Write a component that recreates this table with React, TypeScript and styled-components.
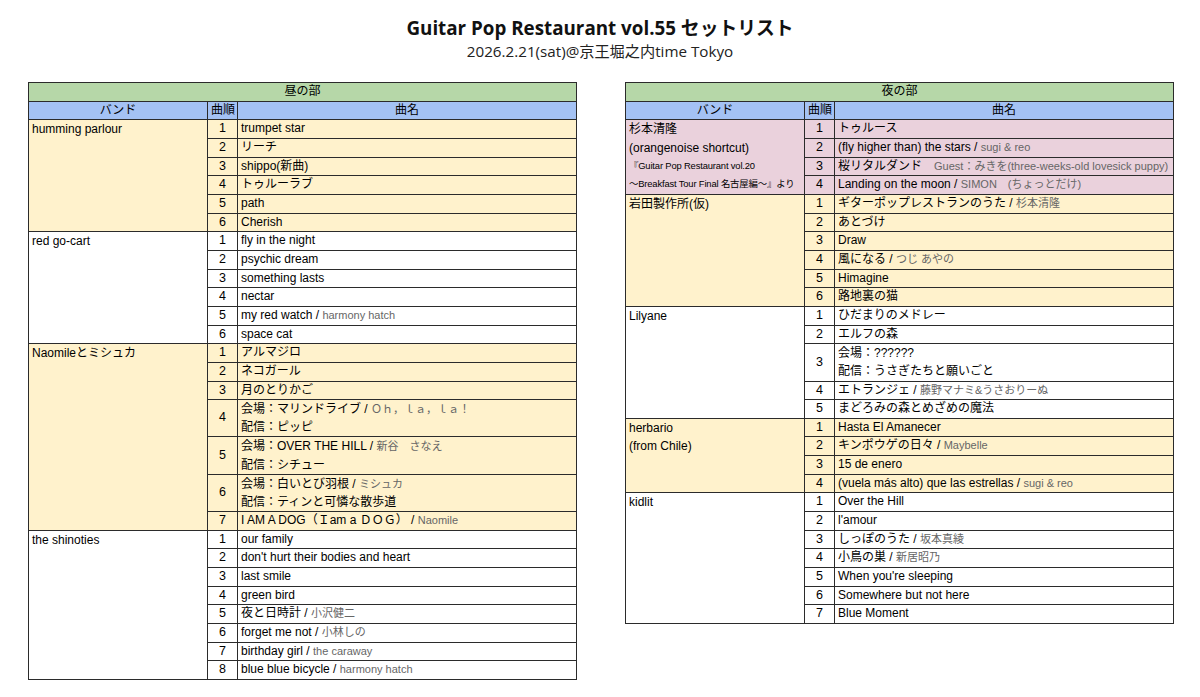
import React from "react";
import styled, { createGlobalStyle } from "styled-components";

// ---------------- Data ----------------
type Line = { title: string; artist?: string; note?: string };
type Song = Line[];
type Tone = "yellow" | "white" | "pink";

interface Band {
  name: string[];
  small?: string[];
  tone: Tone;
  songs: Song[];
}

const s = (title: string, artist?: string): Song => [{ title, artist }];

const dayBands: Band[] = [
  {
    name: ["humming parlour"],
    tone: "yellow",
    songs: [s("trumpet star"), s("リーチ"), s("shippo(新曲)"), s("トゥルーラブ"), s("path"), s("Cherish")],
  },
  {
    name: ["red go-cart"],
    tone: "white",
    songs: [
      s("fly in the night"),
      s("psychic dream"),
      s("something lasts"),
      s("nectar"),
      s("my red watch", "harmony hatch"),
      s("space cat"),
    ],
  },
  {
    name: ["Naomileとミシュカ"],
    tone: "yellow",
    songs: [
      s("アルマジロ"),
      s("ネコガール"),
      s("月のとりかご"),
      [{ title: "会場：マリンドライブ", artist: "Ｏｈ，ｌａ，ｌａ！" }, { title: "配信：ピッピ" }],
      [{ title: "会場：OVER THE HILL", artist: "新谷　さなえ" }, { title: "配信：シチュー" }],
      [{ title: "会場：白いとび羽根", artist: "ミシュカ" }, { title: "配信：ティンと可憐な散歩道" }],
      s("I AM A DOG（Ｉam a ＤＯＧ） ", "Naomile"),
    ],
  },
  {
    name: ["the shinoties"],
    tone: "white",
    songs: [
      s("our family"),
      s("don't hurt their bodies and heart"),
      s("last smile"),
      s("green bird"),
      s("夜と日時計", "小沢健二"),
      s("forget me not", "小林しの"),
      s("birthday girl", "the caraway"),
      s("blue blue bicycle", "harmony hatch"),
    ],
  },
];

const nightBands: Band[] = [
  {
    name: ["杉本清隆", "(orangenoise shortcut)"],
    small: ["『Guitar Pop Restaurant vol.20", "～Breakfast Tour Final 名古屋編～』より"],
    tone: "pink",
    songs: [
      s("トゥルース"),
      s("(fly higher than) the stars", "sugi & reo"),
      [{ title: "桜リタルダンド", note: "Guest：みきを(three-weeks-old lovesick puppy)" }],
      s("Landing on the moon", "SIMON　(ちょっとだけ)"),
    ],
  },
  {
    name: ["岩田製作所(仮)"],
    tone: "yellow",
    songs: [
      s("ギターポップレストランのうた", "杉本清隆"),
      s("あとづけ"),
      s("Draw"),
      s("風になる", "つじ あやの"),
      s("Himagine"),
      s("路地裏の猫"),
    ],
  },
  {
    name: ["Lilyane"],
    tone: "white",
    songs: [
      s("ひだまりのメドレー"),
      s("エルフの森"),
      [{ title: "会場：??????" }, { title: "配信：うさぎたちと願いごと" }],
      s("エトランジェ", "藤野マナミ&うさおりーぬ"),
      s("まどろみの森とめざめの魔法"),
    ],
  },
  {
    name: ["herbario", "(from Chile)"],
    tone: "yellow",
    songs: [
      s("Hasta El Amanecer"),
      s("キンポウゲの日々", "Maybelle"),
      s("15 de enero"),
      s("(vuela más alto) que las estrellas", "sugi & reo"),
    ],
  },
  {
    name: ["kidlit"],
    tone: "white",
    songs: [
      s("Over the Hill"),
      s("l'amour"),
      s("しっぽのうた", "坂本真綾"),
      s("小鳥の巣", "新居昭乃"),
      s("When you're sleeping"),
      s("Somewhere but not here"),
      s("Blue Moment"),
    ],
  },
];

const toneColor: Record<Tone, string> = {
  yellow: "#fff2cc",
  white: "#ffffff",
  pink: "#ead1dc",
};

// ---------------- Components ----------------
const SetTable: React.FC<{ title: string; bands: Band[] }> = ({ title, bands }) => (
  <Table>
    <colgroup>
      <col style={{ width: 179 }} />
      <col style={{ width: 30 }} />
      <col />
    </colgroup>
    <thead>
      <tr>
        <SectionTh colSpan={3}>{title}</SectionTh>
      </tr>
      <tr>
        <ColTh>バンド</ColTh>
        <ColTh>曲順</ColTh>
        <ColTh>曲名</ColTh>
      </tr>
    </thead>
    {bands.map((band) => (
      <tbody key={band.name[0]}>
        {band.songs.map((song, i) => (
          <tr key={i}>
            {i === 0 && (
              <BandTd rowSpan={band.songs.length} $tone={band.tone}>
                {band.name.map((n) => (
                  <BandLine key={n}>{n}</BandLine>
                ))}
                {band.small?.map((n) => (
                  <BandLine key={n} $small>
                    {n}
                  </BandLine>
                ))}
              </BandTd>
            )}
            <NumTd $tone={band.tone}>{i + 1}</NumTd>
            <SongTd $tone={band.tone}>
              {song.map((line, j) => (
                <SongLine key={j} $multi={song.length > 1}>
                  {line.title}
                  {line.artist && (
                    <>
                      {" / "}
                      <Artist>{line.artist}</Artist>
                    </>
                  )}
                  {line.note && (
                    <>
                      {"　"}
                      <Artist>{line.note}</Artist>
                    </>
                  )}
                </SongLine>
              ))}
            </SongTd>
          </tr>
        ))}
      </tbody>
    ))}
  </Table>
);

const App: React.FC = () => (
  <Page>
    <GlobalStyle />
    <Header>
      <Title>Guitar Pop Restaurant vol.55 セットリスト</Title>
      <Subtitle>2026.2.21(sat)@京王堀之内time Tokyo</Subtitle>
    </Header>
    <Tables>
      <SetTable title="昼の部" bands={dayBands} />
      <SetTable title="夜の部" bands={nightBands} />
    </Tables>
  </Page>
);

// ---------------- Styled Components ----------------
const GlobalStyle = createGlobalStyle`
  body {
    margin: 0;
    background: #fff;
    color: #000;
    font-family: "Liberation Sans", "Noto Sans CJK JP", sans-serif;
  }
`;

const Page = styled.div`
  width: 1200px;
  padding-top: 15px;
`;

const Header = styled.div`
  display: flex;
  flex-direction: column;
  align-items: center;
  font-family: "Open Sans", "Noto Sans CJK JP", sans-serif;
`;

const Title = styled.h1`
  margin: 0;
  font-size: 18.8px;
  font-weight: 700;
  line-height: 26px;
  color: #111;
`;

const Subtitle = styled.div`
  font-size: 15.2px;
  line-height: 21px;
  color: #222;
`;

const Tables = styled.div`
  display: flex;
  align-items: flex-start;
  gap: 48px;
  padding: 20px 0 0 28px;
`;

const Table = styled.table`
  width: 549px;
  table-layout: fixed;
  border-collapse: collapse;
  border: 1px solid #333;
  font-size: 12px;

  tr {
    height: 18.66px;
  }
`;

const cell = `
  border: 1px solid #2b2b2b;
  padding: 0 3px;
  line-height: 17.66px;
  white-space: nowrap;
  overflow: hidden;
`;

const SectionTh = styled.th`
  ${cell}
  background: #b6d7a8;
  font-weight: 400;
  text-align: center;
`;

const ColTh = styled.th`
  ${cell}
  background: #a4c2f4;
  font-weight: 400;
  text-align: center;
`;

const BandTd = styled.td<{ $tone: Tone }>`
  ${cell}
  background: ${(p) => toneColor[p.$tone]};
  vertical-align: top;
`;

const BandLine = styled.div<{ $small?: boolean }>`
  height: 18.4px;
  line-height: 18.4px;
  font-size: ${(p) => (p.$small ? "9.4px" : "12px")};
  letter-spacing: ${(p) => (p.$small ? "-0.15px" : "normal")};
`;

const NumTd = styled.td<{ $tone: Tone }>`
  ${cell}
  background: ${(p) => toneColor[p.$tone]};
  text-align: center;
  font-size: 12.5px;
`;

const SongTd = styled.td<{ $tone: Tone }>`
  ${cell}
  background: ${(p) => toneColor[p.$tone]};
`;

const SongLine = styled.div<{ $multi?: boolean }>`
  line-height: ${(p) => (p.$multi ? "18.16px" : "17.66px")};
`;

const Artist = styled.span`
  color: #666;
  font-size: 11px;
`;

export default App;
